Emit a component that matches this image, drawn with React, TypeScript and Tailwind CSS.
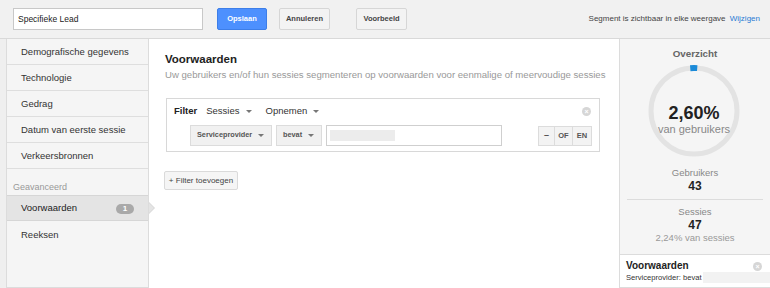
import React from 'react';

const sideItems = [
  'Demografische gegevens',
  'Technologie',
  'Gedrag',
  'Datum van eerste sessie',
  'Verkeersbronnen',
];

const Caret = () => (
  <span className="inline-block ml-[6px] w-0 h-0 border-l-[3px] border-r-[3px] border-t-[3px] border-l-transparent border-r-transparent border-t-[#777] align-middle" />
);

const CloseDot = () => (
  <span className="flex items-center justify-center w-[9px] h-[9px] rounded-full bg-[#d6d6d6] text-white text-[7px] leading-none font-bold">
    ×
  </span>
);

const App = () => {
  return (
    <div className="w-[770px] h-[288px] overflow-hidden flex flex-col bg-[#efefef] font-['Liberation_Sans',Arial,sans-serif] text-[#333]">
      {/* top bar */}
      <div className="h-[39px] shrink-0 flex items-center pl-[13px] pr-[10px] border-b border-[#d9d9d9] bg-[#f1f1f1]">
        <div className="w-[190px] h-[22px] bg-white border border-[#c8c8c8] flex items-center px-[4px] text-[8.5px] text-[#222]">
          Specifieke Lead
        </div>
        <button className="ml-[14px] w-[50px] h-[22px] rounded-[2px] bg-[#4d90fe] border border-[#3d7ee8] text-white text-[7.5px] font-bold">
          Opslaan
        </button>
        <button className="ml-[12px] w-[51px] h-[22px] rounded-[2px] bg-[#f3f3f3] border border-[#d6d6d6] text-[#444] text-[7.5px] font-bold">
          Annuleren
        </button>
        <button className="ml-[26px] w-[51px] h-[22px] rounded-[2px] bg-[#f3f3f3] border border-[#d6d6d6] text-[#444] text-[7.5px] font-bold">
          Voorbeeld
        </button>
        <div className="ml-auto text-[8px] text-[#444] whitespace-nowrap">
          Segment is zichtbaar in elke weergave{' '}
          <span className="ml-[2px] text-[#2a7bd4]">Wijzigen</span>
        </div>
      </div>

      <div className="flex flex-1 min-h-0 pl-[6px]">
        {/* sidebar */}
        <div className="w-[143px] shrink-0 bg-[#f5f5f5] border-l border-r border-b border-[#dcdcdc] flex flex-col">
          {sideItems.map((s) => (
            <div key={s} className="h-[26px] shrink-0 flex items-center pt-[2px] px-[14px] border-b border-[#dedede] text-[9.5px] text-[#333] whitespace-nowrap">
              {s}
            </div>
          ))}
          <div className="h-[26px] shrink-0 flex items-end pb-[1px] pl-[6px] text-[9px] text-[#999]">
            Geavanceerd
          </div>
          <div className="relative h-[26px] shrink-0 flex items-center justify-between pt-[1px] pl-[14px] pr-[14px] bg-[#e4e4e4] border-t border-b border-[#d6d6d6] text-[9.5px] text-[#222]">
            <span>Voorwaarden</span>
            <span className="w-[18px] h-[10px] rounded-full bg-[#a9a9a9] text-white text-[8px] font-bold flex items-center justify-center">
              1
            </span>
            <span className="absolute right-[-7px] top-[6px] w-0 h-0 border-t-[6px] border-b-[6px] border-l-[6px] border-t-transparent border-b-transparent border-l-[#d6d6d6]" />
            <span className="absolute right-[-6px] top-[7px] w-0 h-0 border-t-[5px] border-b-[5px] border-l-[5px] border-t-transparent border-b-transparent border-l-[#e4e4e4]" />
          </div>
          <div className="h-[26px] shrink-0 flex items-center pt-[3px] px-[14px] text-[9.5px] text-[#333]">
            Reeksen
          </div>
        </div>

        {/* main */}
        <div className="flex-1 min-w-0 bg-white overflow-hidden pl-[16px] pt-[12px]">
          <div className="text-[11.5px] font-bold text-[#222] leading-[16px]">Voorwaarden</div>
          <div className="text-[9.6px] text-[#999] whitespace-nowrap leading-[14px] mt-[1px]">
            Uw gebruikers en/of hun sessies segmenteren op voorwaarden voor eenmalige of meervoudige sessies
          </div>

          <div className="mt-[16px] ml-[1px] w-[434px] h-[54px] border border-[#d8d8d8] px-[7px] pt-[5px]">
            <div className="flex items-center h-[14px] text-[9.5px]">
              <span className="font-bold text-[#222]">Filter</span>
              <span className="ml-[9px] text-[#333]">Sessies</span>
              <Caret />
              <span className="ml-[14px] text-[#333]">Opnemen</span>
              <Caret />
              <span className="ml-auto mr-[1px]">
                <CloseDot />
              </span>
            </div>
            <div className="flex items-center mt-[7px] pl-[16px]">
              <div className="w-[82px] h-[21px] bg-[#f1f1f1] border border-[#dcdcdc] flex items-center pl-[6px] text-[7.3px] font-bold text-[#555]">
                Serviceprovider
                <Caret />
              </div>
              <div className="ml-[4px] w-[46px] h-[21px] bg-[#f1f1f1] border border-[#dcdcdc] flex items-center pl-[6px] text-[7.3px] font-bold text-[#555]">
                bevat
                <Caret />
              </div>
              <div className="ml-[4px] w-[176px] h-[21px] bg-white border border-[#cfcfcf] flex items-center pl-[3px]">
                <div className="w-[65px] h-[11px] bg-[#ececec]" />
              </div>
              <div className="ml-auto flex h-[20px] border border-[#dcdcdc] bg-[#f3f3f3] text-[7.5px] font-bold text-[#555]">
                <div className="w-[16px] flex items-center justify-center border-r border-[#dcdcdc] text-[9px]">–</div>
                <div className="w-[18px] flex items-center justify-center border-r border-[#dcdcdc]">OF</div>
                <div className="w-[18px] flex items-center justify-center">EN</div>
              </div>
            </div>
          </div>

          <button className="mt-[19px] -ml-[1px] w-[74px] h-[19px] rounded-[2px] bg-[#f5f5f5] border border-[#dadada] text-[8px] text-[#444]">
            + Filter toevoegen
          </button>
        </div>

        {/* overview */}
        <div className="w-[151px] shrink-0 bg-[#f5f5f5] border-l border-[#dcdcdc] flex flex-col">
          <div className="flex flex-col items-center pt-[8px]">
            <div className="text-[9.8px] font-bold text-[#666] leading-[14px]">Overzicht</div>
            <div className="relative w-[92px] h-[92px] mt-[4px] -ml-[2px]">
              <svg width="92" height="92" viewBox="0 0 92 92" className="absolute inset-0">
                <circle cx="46" cy="46" r="43" fill="none" stroke="#e3e3e3" strokeWidth="5" />
                <circle
                  cx="46"
                  cy="46"
                  r="43"
                  fill="none"
                  stroke="#1b8ad8"
                  strokeWidth="6"
                  strokeDasharray="7 300"
                  transform="rotate(-95 46 46)"
                />
              </svg>
              <div className="absolute inset-0 flex flex-col items-center justify-center pt-[16px]">
                <div className="text-[18px] font-bold text-[#222] leading-[20px]">2,60%</div>
                <div className="text-[11px] text-[#888] leading-[13px]">van gebruikers</div>
              </div>
            </div>
          </div>
          <div className="flex flex-col items-center mt-[10px] text-[9.5px] leading-[12px]">
            <div className="text-[#888]">Gebruikers</div>
            <div className="text-[12px] font-bold text-[#222] leading-[14px]">43</div>
          </div>
          <div className="mx-[7px] mt-[6px] border-t border-[#dcdcdc]" />
          <div className="flex flex-col items-center mt-[6px] text-[9.5px] leading-[12px]">
            <div className="text-[#888]">Sessies</div>
            <div className="text-[12px] font-bold text-[#222] leading-[14px]">47</div>
            <div className="text-[#999]">2,24% van sessies</div>
          </div>
          <div className="mt-auto h-[34px] bg-white border-t border-b border-[#dcdcdc] pl-[6px] pt-[4px] relative">
            <div className="text-[10px] font-bold text-[#222] leading-[13px]">Voorwaarden</div>
            <div className="flex items-center text-[7.6px] text-[#333] leading-[11px] whitespace-nowrap">
              Serviceprovider: bevat
              <span className="ml-[1px] flex-1 h-[11px] bg-[#f2f2f2]" />
            </div>
            <span className="absolute right-[8px] top-[7px]">
              <CloseDot />
            </span>
          </div>
        </div>
      </div>
    </div>
  );
};

export default App;
